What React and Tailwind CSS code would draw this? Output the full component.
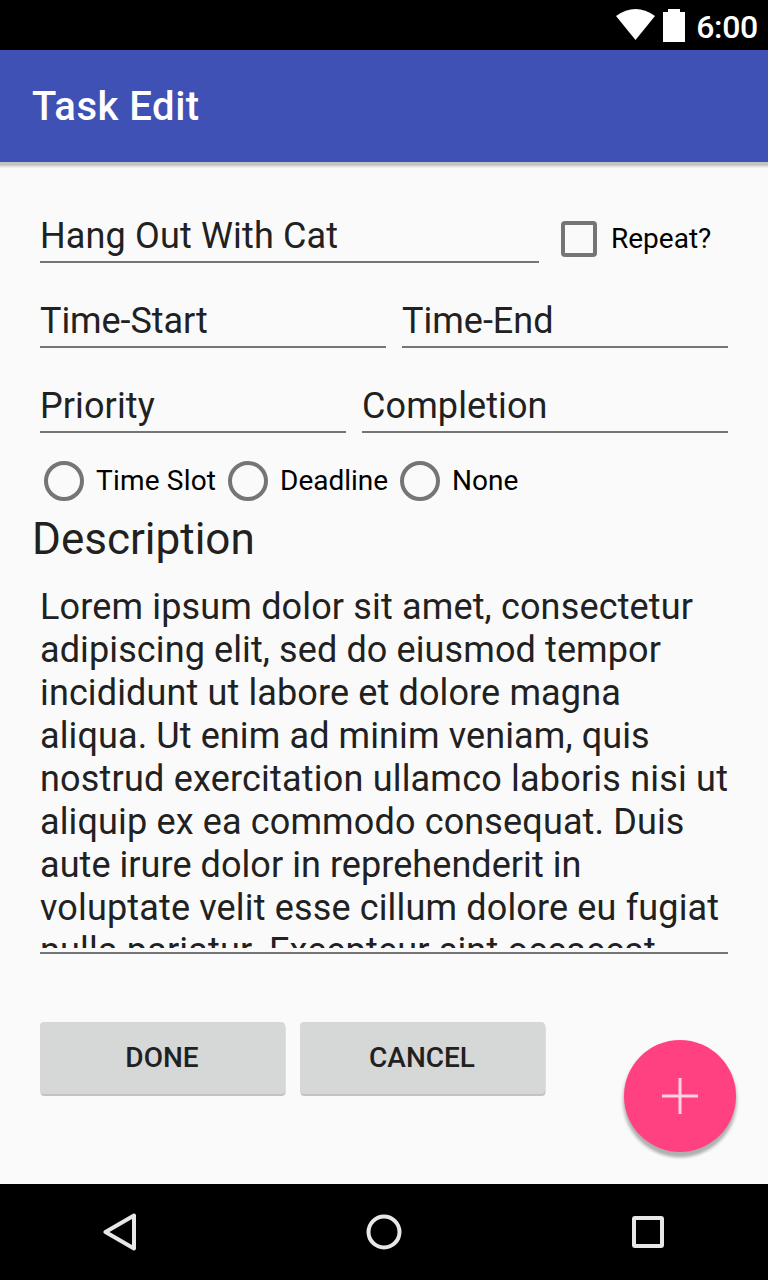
function Field({ children, className }) {
  return (
    <div className={"border-b-2 border-[#757575] text-[36px] leading-[42px] " + className}>
      <span className="block whitespace-nowrap">{children}</span>
    </div>
  );
}

function Radio({ label, className }) {
  return (
    <div className={"flex items-center " + className}>
      <span className="ml-1 size-10 rounded-full border-4 border-[#757575]" />
      <span className="ml-3 text-[28px] leading-8 whitespace-nowrap text-black">{label}</span>
    </div>
  );
}

const lines = [
  ["Lorem ipsum dolor sit amet, consectetur", "tracking-[0.155px]"],
  ["adipiscing elit, sed do eiusmod tempor", "tracking-[0.11px]"],
  ["incididunt ut labore et dolore magna", "tracking-[0.13px]"],
  ["aliqua. Ut enim ad minim veniam, quis", "tracking-[0.11px]"],
  ["nostrud exercitation ullamco laboris nisi ut", "tracking-[0.2px]"],
  ["aliquip ex ea commodo consequat. Duis", "tracking-[0.14px]"],
  ["aute irure dolor in reprehenderit in", "tracking-[0.06px]"],
  ["voluptate velit esse cillum dolore eu fugiat", "tracking-[0.155px]"],
  ["nulla pariatur. Excepteur sint occaecat", "tracking-[0.175px]"],
];

function Button({ children }) {
  return (
    <button className="h-[72px] w-[245px] shrink-0 rounded-[4px] bg-[#d6d7d7] pb-px text-[28px] font-medium text-[#212121] shadow-[0.5px_2px_0.5px_#c3c3c3]">
      {children}
    </button>
  );
}

export default function App() {
  return (
    <div className="flex h-[1280px] w-[768px] flex-col overflow-hidden bg-[#fafafa] font-['Roboto',sans-serif] text-[#212121]">
      <div className="flex h-[50px] shrink-0 items-center justify-end bg-black pr-[10px] text-white">
        <svg width="40" height="32" viewBox="0 0 40 32" className="mr-[7px]" fill="white">
          <path d="M0 7Q19.5-7 39 7L19.5 31Z" />
        </svg>
        <svg width="22" height="34" viewBox="0 0 22 34" fill="white">
          <path d="M5 1H17V4H22V34H0V4H5Z" />
        </svg>
        <span className="ml-[11px] pt-1 text-[32px] leading-10 font-medium tracking-[-0.3px]">6:00</span>
      </div>
      <header className="flex h-28 shrink-0 items-center bg-[#3f51b5] pt-[2px] pl-8 text-[40px] font-medium tracking-[0.52px] text-white shadow-[0_3px_0_#c4c4c4,0_4px_0_#d0d0d0,0_5px_0_#e0e0e0,0_6px_0_#f0f0f0]">
        <h1>Task Edit</h1>
      </header>
      <main className="flex h-[1022px] shrink-0 flex-col px-10 pt-[53px]">
        <div className="flex h-[48px]">
          <Field className="w-[499px] tracking-[0.15px]">Hang Out With Cat</Field>
          <div className="ml-[22px] flex items-center">
            <span className="size-9 rounded-[4px] border-4 border-[#757575]" />
            <span className="ml-[14px] text-[28px] whitespace-nowrap text-black">Repeat?</span>
          </div>
        </div>
        <div className="mt-[37px] flex h-12 gap-4">
          <Field className="w-[346px] tracking-[-0.08px]">Time-Start</Field>
          <Field className="w-[326px]">Time-End</Field>
        </div>
        <div className="mt-[37px] flex h-12 gap-4">
          <Field className="w-[306px] tracking-[0.1px]">Priority</Field>
          <Field className="w-[366px] tracking-[0.1px]">Completion</Field>
        </div>
        <div className="mt-[28px] flex h-10">
          <Radio label="Time Slot" className="w-[184px] tracking-[0.2px]" />
          <Radio label="Deadline" className="w-[172px]" />
          <Radio label="None" />
        </div>
        <h2 className="mt-[12px] -ml-2 h-[52px] text-[44px] leading-[52px]">Description</h2>
        <div className="mt-[20px] h-[369px] border-b-2 border-[#757575]">
          <div className="h-[363px] overflow-hidden pt-px text-[36px] leading-[43px]">
            {lines.map(([text, tracking]) => (
              <p key={text} className={"whitespace-nowrap " + tracking}>{text}</p>
            ))}
          </div>
        </div>
        <div className="-mr-2 -ml-[0.5px] mt-[68px] flex gap-[15px]">
          <Button>DONE</Button>
          <Button>CANCEL</Button>
          <button className="mt-[18px] ml-[64px] flex size-28 shrink-0 items-center justify-center rounded-full bg-[#ff4081] shadow-[0_5px_3px_rgba(0,0,0,0.2),0_4px_3px_2px_rgba(0,0,0,0.12)]">
            <svg width="36" height="36" viewBox="0 0 36 36" fill="none" stroke="#ffd2e1" strokeWidth="3">
              <path d="M18 0V36M0 18H36" />
            </svg>
          </button>
        </div>
      </main>
      <nav className="flex h-24 shrink-0 items-center justify-between bg-black pr-[103px] pl-[103px]">
        <svg width="34" height="40" viewBox="0 0 34 40" fill="none" stroke="#e8e8e8" strokeWidth="4" strokeLinejoin="round">
          <path d="M31 3.5V36.5L2.5 20Z" />
        </svg>
        <svg width="36" height="36" viewBox="0 0 36 36" fill="none" stroke="#e8e8e8" strokeWidth="4">
          <circle cx="18" cy="18" r="15.5" />
        </svg>
        <svg width="34" height="34" viewBox="0 0 34 34" fill="none" stroke="#e8e8e8" strokeWidth="4">
          <rect x="3" y="3" width="28" height="28" rx="1" />
        </svg>
      </nav>
    </div>
  );
}
